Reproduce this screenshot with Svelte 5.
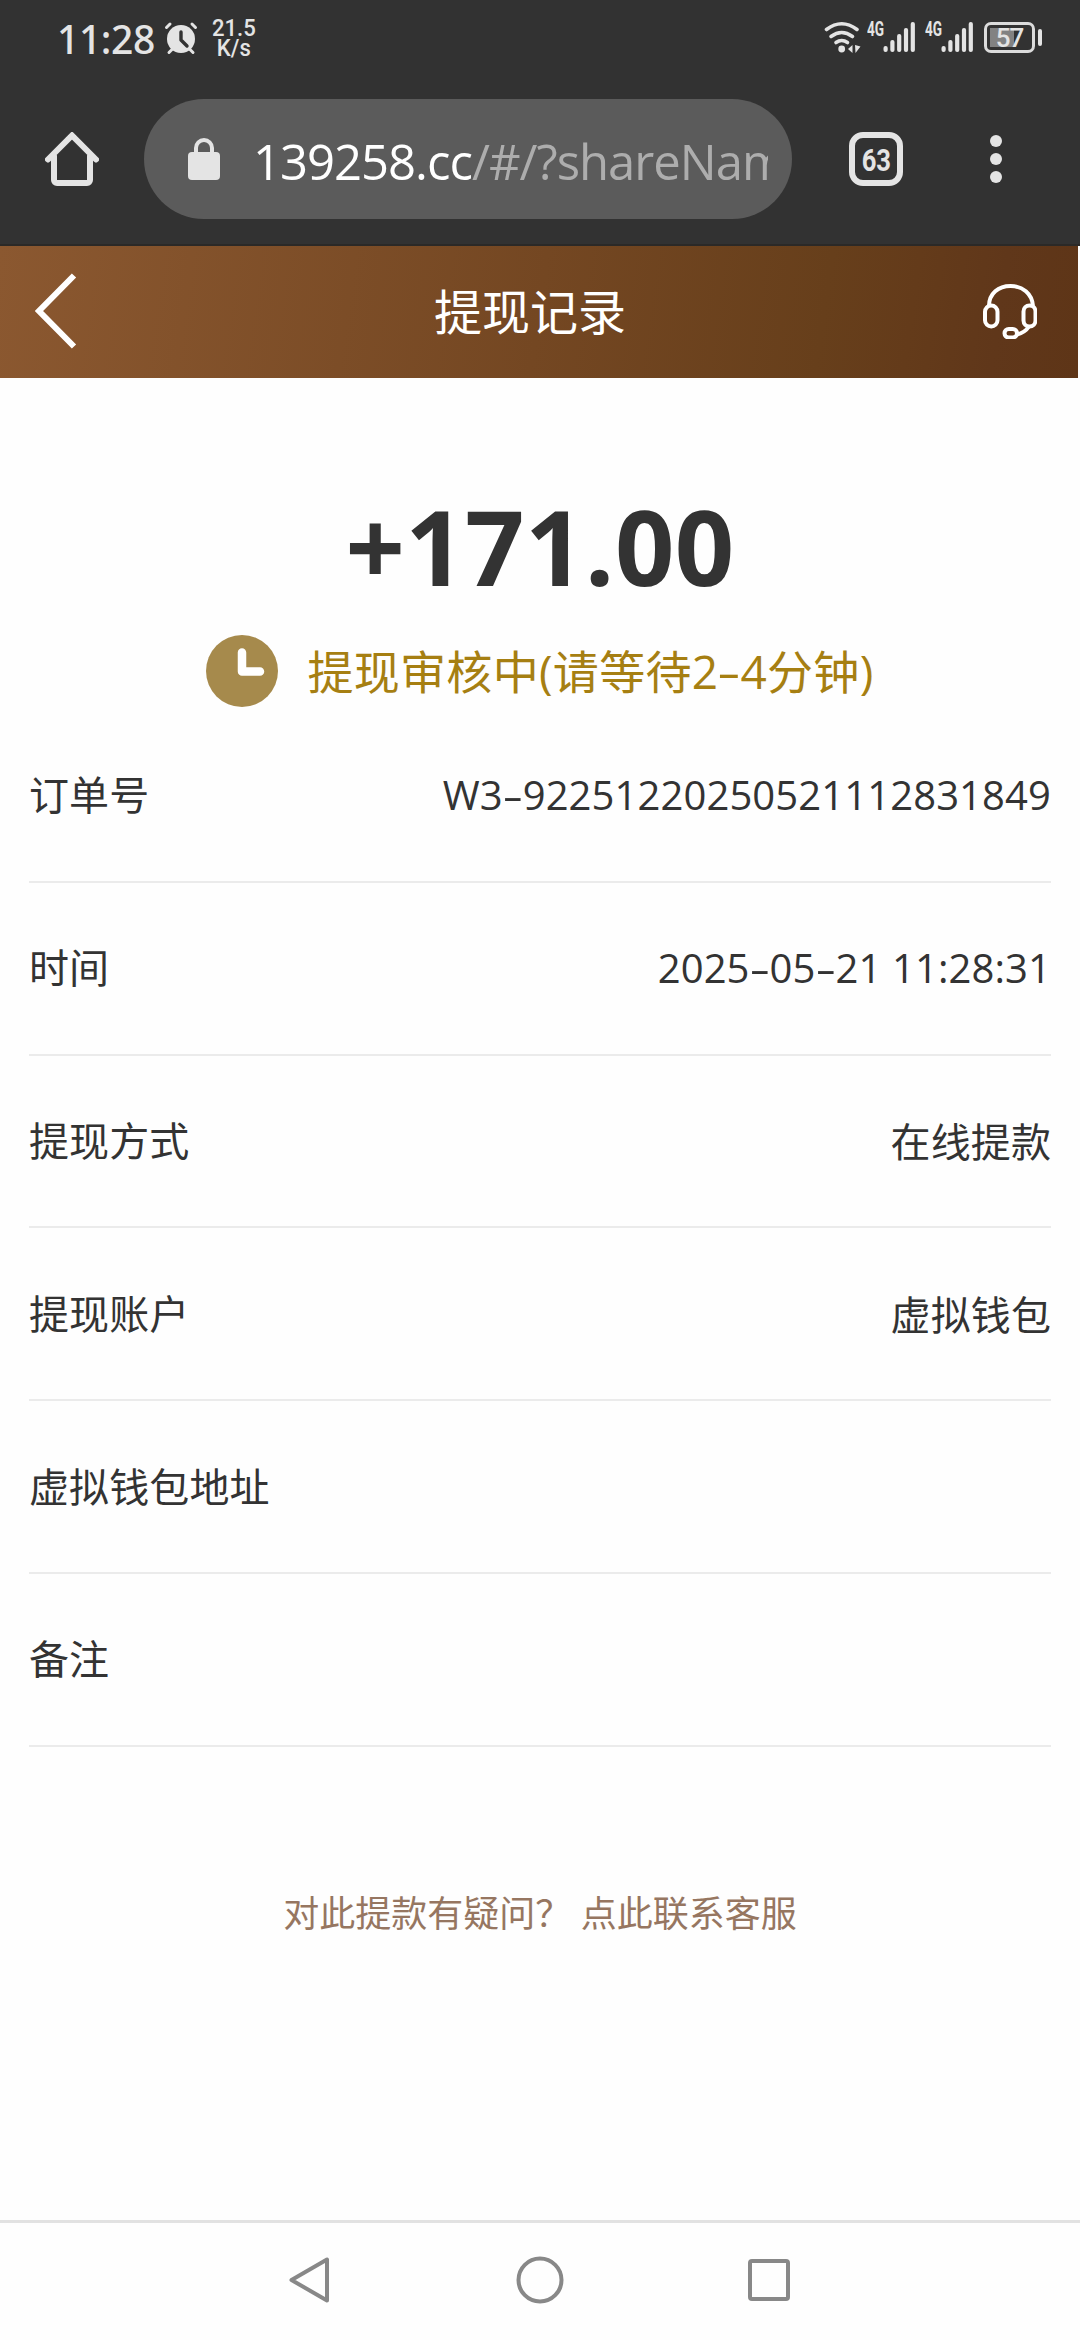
<script lang="ts">
	type Row = { label: string; value: string };

	const rows: Row[] = [
		{ label: '订单号', value: 'W3-92251220250521112831849' },
		{ label: '时间', value: '2025-05-21 11:28:31' },
		{ label: '提现方式', value: '在线提款' },
		{ label: '提现账户', value: '虚拟钱包' },
		{ label: '虚拟钱包地址', value: '' },
		{ label: '备注', value: '' }
	];

	const bars = [6, 12, 18, 24, 30];
</script>

{#snippet signal()}
	<div class="signal">
		<span class="network">4G</span>
		<svg width="33" height="32" viewBox="0 0 33 32">
			{#each bars as h, i}
				<rect x={0.5 + i * 6.8} y={31 - h} width="4.2" height={h} rx="2" fill="currentColor" />
			{/each}
		</svg>
	</div>
{/snippet}

{#snippet dashed(text: string)}
	{#each text.split('-') as part, i}{#if i > 0}<span class="dash">-</span>{/if}{part}{/each}
{/snippet}

<div class="phone">
	<div class="browser">
		<div class="status-bar">
			<span class="time">11:28</span>
			<!-- Alarm -->
			<svg class="alarm" width="34" height="34" viewBox="0 0 34 34" fill="none">
				<circle cx="17" cy="18" r="14" fill="currentColor" />
				<path
					d="M2.5 6.5l3.5-3.5M31.5 6.5L28 3M5 31.5l3-3M29 31.5l-3-3"
					stroke="currentColor"
					stroke-width="3"
					stroke-linecap="round"
				/>
				<path
					d="M17 11v8l6 6"
					stroke="#323232"
					stroke-width="3.4"
					stroke-linecap="round"
					stroke-linejoin="round"
				/>
			</svg>
			<div class="speed">
				<span>21.5</span>
				<span>K/s</span>
			</div>

			<div class="status-icons">
				<!-- WiFi -->
				<svg class="wifi" width="38" height="32" viewBox="0 0 38 32" fill="none">
					<g stroke="currentColor" stroke-width="3.6" stroke-linecap="round">
						<path d="M2.5 8.5Q17.7 -3 33 8.5" />
						<path d="M7 15.5Q17.7 7.5 28.5 15.5" />
						<path d="M12 21.5Q17.7 17.5 23.5 21.5" />
					</g>
					<circle cx="17.7" cy="28" r="3.4" fill="currentColor" />
					<path d="M24 28l4.5-4v8zM31 24l.5 8 5-6.5z" fill="currentColor" />
				</svg>
				{@render signal()}
				{@render signal()}
				<!-- Battery -->
				<div class="battery">
					<span class="battery-body">57</span>
					<span class="battery-cap"></span>
				</div>
			</div>
		</div>

		<div class="toolbar">
			<!-- Home -->
			<svg class="home" width="54" height="54" viewBox="0 0 54 54" fill="none">
				<path
					d="M3 27.5L27 3.5l24 24M9 24v24a3 3 0 003 3h30a3 3 0 003-3V24"
					stroke="currentColor"
					stroke-width="6"
					stroke-linecap="round"
					stroke-linejoin="miter"
				/>
			</svg>
			<div class="url-field">
				<!-- Lock -->
				<svg width="32" height="42" viewBox="0 0 32 42" fill="none">
					<rect x="0" y="14" width="32" height="28" rx="4" fill="currentColor" />
					<path d="M8 16v-6a8 8 0 0116 0v6" stroke="currentColor" stroke-width="4" />
				</svg>
				<div class="url"><span class="host">139258.cc</span>/#/?shareName</div>
			</div>
			<div class="tabs"><span>63</span></div>
			<!-- Menu -->
			<svg class="menu" width="12" height="48" viewBox="0 0 12 48">
				<circle cx="6" cy="6" r="6" fill="currentColor" />
				<circle cx="6" cy="24" r="6" fill="currentColor" />
				<circle cx="6" cy="42" r="6" fill="currentColor" />
			</svg>
		</div>
	</div>

	<header class="header">
		<!-- Back -->
		<svg width="42" height="76" viewBox="0 0 42 76" fill="none">
			<path d="M39 2.5L4 38l35 35.5" stroke="#fff" stroke-width="6" />
		</svg>
		<h1>提现记录</h1>
		<!-- Customer service -->
		<svg width="54" height="55" viewBox="0 0 54 55" fill="none" stroke="#fff" stroke-width="4">
			<path d="M6 22C6 9.5 15.5 2 27.5 2S49 9.5 50 22" />
			<rect x="2" y="21.5" width="12.5" height="21" rx="6.25" />
			<rect x="40.5" y="21.5" width="12" height="21" rx="6" />
			<rect x="21.5" y="45" width="12.5" height="8.5" rx="4.25" />
			<path d="M34 50.5q8-2 12-8" />
		</svg>
	</header>

	<main class="content">
		<div class="amount">+171.00</div>
		<div class="state">
			<!-- Clock -->
			<svg width="72" height="72" viewBox="0 0 72 72" fill="none">
				<circle cx="36" cy="36" r="36" fill="#a68a4c" />
				<path
					d="M36 17.5v19h18"
					stroke="#fff"
					stroke-width="8.5"
					stroke-linecap="round"
					stroke-linejoin="round"
				/>
			</svg>
			<span class="state-text">{@render dashed('提现审核中(请等待2-4分钟)')}</span>
		</div>

		<div class="rows">
			{#each rows as row}
				<div class="row">
					<span>{row.label}</span>
					<span class="value">{@render dashed(row.value)}</span>
				</div>
			{/each}
		</div>

		<p class="help">对此提款有疑问？ <span>点此联系客服</span></p>
	</main>

	<nav class="nav-bar">
		<!-- Back -->
		<svg width="48" height="48" viewBox="0 0 48 48" fill="none">
			<path
				d="M40 3.5v41L4.5 24z"
				stroke="currentColor"
				stroke-width="4"
				stroke-linejoin="round"
			/>
		</svg>
		<!-- Home -->
		<svg width="48" height="48" viewBox="0 0 48 48" fill="none">
			<circle cx="24" cy="24" r="21.5" stroke="currentColor" stroke-width="4" />
		</svg>
		<!-- Recents -->
		<svg width="48" height="48" viewBox="0 0 48 48" fill="none">
			<rect x="5" y="5" width="38" height="38" rx="2" stroke="currentColor" stroke-width="4" />
		</svg>
	</nav>
</div>

<style>
	:global(body) {
		margin: 0;
		background: #fefefe;
	}

	.phone {
		display: flex;
		flex-direction: column;
		width: 1080px;
		height: 2340px;
		overflow: hidden;
		background: #fefefe;
		color: #333;
		font-family: 'Open Sans', 'Noto Sans CJK SC', sans-serif;
	}

	svg {
		display: block;
		flex-shrink: 0;
	}

	/* Browser chrome */
	.browser {
		height: 246px;
		box-sizing: border-box;
		background: #323232;
		border-bottom: 2px solid #2b2927;
		color: #e4e4e4;
		flex-shrink: 0;
	}

	.status-bar {
		display: flex;
		align-items: center;
		height: 72px;
		padding: 5px 38px 0 57px;
		box-sizing: border-box;
	}

	.time {
		width: 107px;
		font-family: 'Noto Sans', 'Open Sans', sans-serif;
		font-size: 39px;
		line-height: 40px;
		font-weight: 500;
		letter-spacing: -0.4px;
	}

	.alarm {
		margin-bottom: 2px;
	}

	.speed {
		display: flex;
		flex-direction: column;
		align-items: center;
		margin: 0 0 2px 12px;
		font-family: Roboto, sans-serif;
		font-size: 24px;
		font-weight: 500;
		line-height: 20px;
		transform: scaleX(0.92);
	}

	.status-icons {
		display: flex;
		align-items: center;
		margin: 0 0 3px auto;
	}

	.wifi {
		margin-right: 5px;
	}

	.signal {
		display: flex;
		align-items: flex-start;
		width: 58px;
		height: 32px;
	}

	.network {
		width: 16px;
		font-family: Roboto, sans-serif;
		font-size: 20px;
		font-weight: 700;
		line-height: 16px;
		transform: scaleX(0.68);
		transform-origin: left;
	}

	.battery {
		display: flex;
		align-items: center;
		gap: 3px;
		margin-left: 1px;
	}

	.battery-body {
		width: 51px;
		height: 31px;
		box-sizing: border-box;
		border: 3px solid #dcdcdc;
		border-radius: 7px;
		background: linear-gradient(#828282, #828282) 3px 3px / 24px 19px no-repeat;
		font-family: Roboto, sans-serif;
		font-size: 26px;
		font-weight: 500;
		line-height: 27px;
		letter-spacing: -1px;
		text-align: center;
	}

	.battery-cap {
		width: 4px;
		height: 17px;
		border-radius: 2px;
		background: #e4e4e4;
	}

	.toolbar {
		display: flex;
		align-items: center;
		height: 174px;
		padding: 0 78px 0 45px;
		box-sizing: border-box;
	}

	.home {
		margin-right: 45px;
	}

	.url-field {
		display: flex;
		align-items: center;
		gap: 33px;
		width: 648px;
		height: 120px;
		padding: 0 24px 0 44px;
		box-sizing: border-box;
		border-radius: 60px;
		background: #5b5b5b;
	}

	.url {
		overflow: hidden;
		flex: 1;
		padding-top: 3px;
		color: #adadad;
		font-size: 49px;
		letter-spacing: -1px;
		white-space: nowrap;
	}

	.host {
		color: #fff;
	}

	.tabs {
		width: 54px;
		height: 54px;
		margin-left: 57px;
		box-sizing: border-box;
		border: 6px solid #e4e4e4;
		border-radius: 14px;
		font-family: Roboto, sans-serif;
		font-size: 32px;
		font-weight: 700;
		line-height: 44px;
		text-align: center;
	}

	.tabs span {
		display: inline-block;
		margin: 0 -4px;
		transform: scaleX(0.8);
	}

	.menu {
		margin-left: auto;
	}

	/* Page header */
	.header {
		display: flex;
		align-items: center;
		justify-content: space-between;
		width: 1078px;
		height: 132px;
		padding: 0 41px 2px 35px;
		box-sizing: border-box;
		background: linear-gradient(
			98deg,
			#8b5830,
			#744722 50%,
			#673f1b 76%,
			#643b1a 84%,
			#60371a 92%,
			#5e3517
		);
		flex-shrink: 0;
	}

	h1 {
		margin: 0;
		padding-top: 2px;
		color: #fff;
		font-size: 48px;
		font-weight: 400;
		line-height: 60px;
	}

	/* Withdrawal record */
	.content {
		flex: 1;
		padding: 0 29px;
	}

	.amount {
		padding-top: 103px;
		font-size: 104px;
		font-weight: 700;
		line-height: 130px;
		letter-spacing: 0.4px;
		text-align: center;
	}

	.state {
		display: flex;
		align-items: center;
		justify-content: center;
		gap: 29px;
		height: 72px;
		margin-top: 24px;
		color: #a67f12;
		font-size: 46px;
		letter-spacing: 0.3px;
		white-space: nowrap;
	}

	.state-text {
		padding-bottom: 5px;
	}

	.dash {
		display: inline-block;
		padding: 0 3.5px;
		transform: scaleX(1.6);
	}

	.rows {
		margin-top: 3px;
		font-size: 40px;
		letter-spacing: 0.1px;
	}

	.row {
		display: flex;
		align-items: center;
		justify-content: space-between;
		height: 172.8px;
		padding-bottom: 4px;
		box-sizing: border-box;
		border-bottom: 2px solid #ebebeb;
	}

	.value {
		padding-top: 2px;
		white-space: nowrap;
	}

	.help {
		margin: 137px 0 0;
		color: #967661;
		font-size: 36px;
		line-height: 60px;
		text-align: center;
	}

	/* System navigation */
	.nav-bar {
		display: flex;
		justify-content: center;
		align-items: center;
		gap: 181px;
		height: 120px;
		padding-bottom: 3px;
		box-sizing: border-box;
		border-top: 3px solid #e2e2e2;
		color: #888;
		flex-shrink: 0;
	}
</style>
